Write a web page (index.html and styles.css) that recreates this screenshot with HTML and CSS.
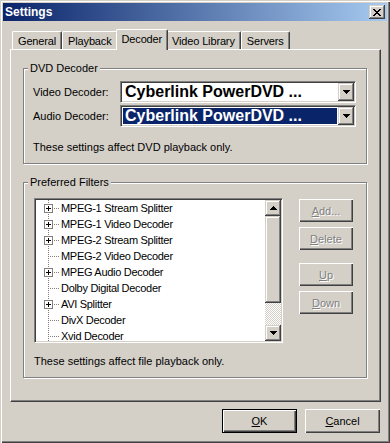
FILE: index.html
```html
<!DOCTYPE html>
<html lang="en">
<head>
    <meta charset="UTF-8">
    <title>Settings</title>
    <link rel="stylesheet" href="styles.css">
</head>
<body>
    <div class="window">
        <div class="titlebar">
            <span class="title">Settings</span>
            <span class="close raised">
                <svg width="8" height="7" viewBox="0 0 8 7"><path d="M0 0h2v1H0zM6 0h2v1H6zM1 1h2v1H1zM5 1h2v1H5zM2 2h4v1H2zM3 3h2v1H3zM2 4h4v1H2zM1 5h2v1H1zM5 5h2v1H5zM0 6h2v1H0zM6 6h2v1H6z" fill="#000"/></svg>
            </span>
        </div>
        <div class="content">
            <div class="tabs">
                <div class="tab">General</div>
                <div class="tab">Playback</div>
                <div class="tab active">Decoder</div>
                <div class="tab">Video Library</div>
                <div class="tab">Servers</div>
            </div>
            <div class="panel">
                <fieldset class="group">
                    <legend>DVD Decoder</legend>
                    <div class="group-body">
                        <div class="field">
                            <label>Video Decoder:</label>
                            <div class="combo">
                                <div class="value"><span>Cyberlink PowerDVD ...</span></div>
                                <span class="drop raised">
                                    <svg width="7" height="4" viewBox="0 0 7 4"><path d="M0 0h7v1H0zM1 1h5v1H1zM2 2h3v1H2zM3 3h1v1H3z" fill="#000"/></svg>
                                </span>
                            </div>
                        </div>
                        <div class="field">
                            <label>Audio Decoder:</label>
                            <div class="combo">
                                <div class="value selected"><span>Cyberlink PowerDVD ...</span></div>
                                <span class="drop raised">
                                    <svg width="7" height="4" viewBox="0 0 7 4"><path d="M0 0h7v1H0zM1 1h5v1H1zM2 2h3v1H2zM3 3h1v1H3z" fill="#000"/></svg>
                                </span>
                            </div>
                        </div>
                        <p class="note">These settings affect DVD playback only.</p>
                    </div>
                </fieldset>

                <fieldset class="group filters">
                    <legend>Preferred Filters</legend>
                    <div class="group-body">
                        <div class="filter-row">
                            <div class="listbox">
                                <ul class="tree">
                                    <li><span class="twig"><svg width="9" height="9"><rect x="0.5" y="0.5" width="8" height="8" fill="#fff" stroke="#808080"/><path d="M2 4h5v1H2zM4 2h1v5H4z" fill="#000"/></svg></span>MPEG-1 Stream Splitter</li>
                                    <li><span class="twig"><svg width="9" height="9"><rect x="0.5" y="0.5" width="8" height="8" fill="#fff" stroke="#808080"/><path d="M2 4h5v1H2zM4 2h1v5H4z" fill="#000"/></svg></span>MPEG-1 Video Decoder</li>
                                    <li><span class="twig"><svg width="9" height="9"><rect x="0.5" y="0.5" width="8" height="8" fill="#fff" stroke="#808080"/><path d="M2 4h5v1H2zM4 2h1v5H4z" fill="#000"/></svg></span>MPEG-2 Stream Splitter</li>
                                    <li><span class="twig"></span>MPEG-2 Video Decoder</li>
                                    <li><span class="twig"><svg width="9" height="9"><rect x="0.5" y="0.5" width="8" height="8" fill="#fff" stroke="#808080"/><path d="M2 4h5v1H2zM4 2h1v5H4z" fill="#000"/></svg></span>MPEG Audio Decoder</li>
                                    <li><span class="twig"></span>Dolby Digital Decoder</li>
                                    <li><span class="twig"><svg width="9" height="9"><rect x="0.5" y="0.5" width="8" height="8" fill="#fff" stroke="#808080"/><path d="M2 4h5v1H2zM4 2h1v5H4z" fill="#000"/></svg></span>AVI Splitter</li>
                                    <li><span class="twig"></span>DivX Decoder</li>
                                    <li><span class="twig"></span>Xvid Decoder</li>
                                </ul>
                                <div class="scrollbar">
                                    <span class="sb-btn raised"><svg width="7" height="4" viewBox="0 0 7 4"><path d="M3 0h1v1H3zM2 1h3v1H2zM1 2h5v1H1zM0 3h7v1H0z" fill="#000"/></svg></span>
                                    <span class="sb-thumb raised"></span>
                                    <span class="sb-track"></span>
                                    <span class="sb-btn raised"><svg width="7" height="4" viewBox="0 0 7 4"><path d="M0 0h7v1H0zM1 1h5v1H1zM2 2h3v1H2zM3 3h1v1H3z" fill="#000"/></svg></span>
                                </div>
                            </div>
                            <div class="side-buttons">
                                <button class="btn" disabled><u>A</u>dd...</button>
                                <button class="btn" disabled><u>D</u>elete</button>
                                <button class="btn spaced" disabled><u>U</u>p</button>
                                <button class="btn" disabled><u>D</u>own</button>
                            </div>
                        </div>
                        <p class="note">These settings affect file playback only.</p>
                    </div>
                </fieldset>
            </div>
            <div class="actions">
                <button class="btn big default"><u>O</u>K</button>
                <button class="btn big"><u>C</u>ancel</button>
            </div>
        </div>
    </div>
</body>
</html>
```

FILE: styles.css
```css
* {
    box-sizing: border-box;
}
body {
    margin: 0;
    font-family: "Liberation Sans", Arial, sans-serif;
    font-size: 11px;
    color: #000;
    background: #d4d0c8;
}
.window {
    width: 390px;
    height: 443px;
    padding: 3px;
    background: #d4d0c8;
    box-shadow: inset 1px 1px #d4d0c8, inset 2px 2px #fff, inset -1px -1px #404040, inset -2px -2px #808080;
}
.raised {
    background: #d4d0c8;
    box-shadow: inset -1px -1px #404040, inset 1px 1px #d4d0c8, inset -2px -2px #808080, inset 2px 2px #fff;
}
.titlebar {
    height: 18px;
    display: flex;
    align-items: center;
    justify-content: space-between;
    padding: 0 2px;
    background: linear-gradient(to right, #0a246a, #a6caf0);
}
.title {
    color: #fff;
    font-weight: bold;
    font-size: 12px;
}
.close {
    width: 16px;
    height: 14px;
    display: flex;
    align-items: center;
    justify-content: center;
}
.content {
    padding: 8px 6px 0 7px;
}

/* tabs */
.tabs {
    display: flex;
    align-items: flex-end;
    height: 20px;
    padding-left: 2px;
}
.tab {
    height: 18px;
    padding: 2px 5px 0;
    line-height: 14px;
    letter-spacing: -0.15px;
    white-space: nowrap;
    border-top: 1px solid #fff;
    border-left: 1px solid #fff;
    border-right: 1px solid #404040;
    border-radius: 2px 2px 0 0;
    box-shadow: inset -1px 0 #808080;
    background: #d4d0c8;
}
.tab.active {
    height: 21px;
    margin: 0 -2px -1px;
    position: relative;
    z-index: 1;
}
.panel {
    height: 353px;
    padding: 12px 13px 0 12px;
    border: 1px solid;
    border-color: #fff #404040 #404040 #fff;
    box-shadow: inset -1px -1px #808080;
}

/* group boxes */
.group {
    margin: 0;
    padding: 0;
    min-width: 0;
    border: 1px solid #808080;
    box-shadow: inset 1px 1px #fff, 1px 1px #fff;
}
.group legend {
    margin-left: 4px;
    padding: 0 2px;
    line-height: 13px;
    background: #d4d0c8;
}
.group-body {
    padding: 6px 9px 9px;
}
.filters {
    margin-top: 12px;
}
.filters .group-body {
    padding: 9px 12px 9px 10px;
}
.note {
    margin: 14px 0 0;
    line-height: 13px;
}
.filters .note {
    margin-top: 12px;
}

/* combo boxes */
.field {
    display: flex;
    align-items: center;
    height: 22px;
}
.field + .field {
    margin-top: 2px;
}
.field label {
    width: 87px;
}
.combo {
    width: 236px;
    height: 22px;
    display: flex;
    padding: 1px;
    background: #fff;
    border: 1px solid;
    border-color: #808080 #fff #fff #808080;
    box-shadow: inset 1px 1px #404040, inset -1px -1px #d4d0c8;
}
.value {
    flex: 1;
    padding: 1px;
    overflow: hidden;
}
.value span {
    display: block;
    height: 16px;
    line-height: 16px;
    padding-left: 2px;
    font-size: 16px;
    font-weight: bold;
    white-space: nowrap;
}
.value.selected span {
    background: #0a246a;
    color: #fff;
}
.drop {
    width: 16px;
    height: 18px;
    display: flex;
    align-items: center;
    justify-content: center;
}

/* filter list */
.filter-row {
    display: flex;
    align-items: flex-start;
}
.listbox {
    width: 249px;
    height: 145px;
    display: flex;
    padding: 1px;
    background: #fff;
    border: 1px solid;
    border-color: #808080 #fff #fff #808080;
    box-shadow: inset 1px 1px #404040, inset -1px -1px #d4d0c8;
}
.tree {
    flex: 1;
    margin: 0;
    padding: 0;
    list-style: none;
    overflow: hidden;
}
.tree li {
    display: flex;
    align-items: center;
    height: 16px;
    letter-spacing: -0.3px;
    white-space: nowrap;
}
.twig {
    width: 17px;
    height: 16px;
    margin-left: 8px;
    flex-shrink: 0;
    background-image: repeating-linear-gradient(to bottom, #808080 0 1px, transparent 1px 2px), repeating-linear-gradient(to right, #808080 0 1px, transparent 1px 2px);
    background-size: 1px 16px, 12px 1px;
    background-position: 4px 0, 4px 8px;
    background-repeat: no-repeat;
}
.twig svg {
    display: block;
    margin-top: 4px;
}
.scrollbar {
    width: 16px;
    display: flex;
    flex-direction: column;
}
.sb-btn {
    height: 16px;
    display: flex;
    align-items: center;
    justify-content: center;
}
.sb-thumb {
    height: 87px;
}
.sb-track {
    height: 22px;
    background-image: conic-gradient(#fff 25%, #d4d0c8 0 50%, #fff 0 75%, #d4d0c8 0);
    background-size: 2px 2px;
}

/* buttons */
.btn {
    font: inherit;
    color: #000;
    border: 0;
    padding: 0;
    background: #d4d0c8;
    box-shadow: inset 1px 1px #fff, inset -1px -1px #404040, inset -2px -2px #808080;
}
.btn:disabled {
    color: #808080;
    text-shadow: 1px 1px #fff;
}
.side-buttons {
    display: flex;
    flex-direction: column;
    margin: 1px 0 0 16px;
}
.side-buttons .btn {
    width: 54px;
    height: 23px;
}
.side-buttons .btn + .btn {
    margin-top: 5px;
}
.side-buttons .btn.spaced {
    margin-top: 13px;
}
.actions {
    display: flex;
    justify-content: flex-end;
    gap: 8px;
    margin-top: 7px;
    padding-right: 1px;
}
.btn.big {
    width: 75px;
    height: 24px;
}
.btn.default {
    box-shadow: inset 0 0 0 1px #000, inset 2px 2px #fff, inset -2px -2px #404040, inset -3px -3px #808080;
}
```
